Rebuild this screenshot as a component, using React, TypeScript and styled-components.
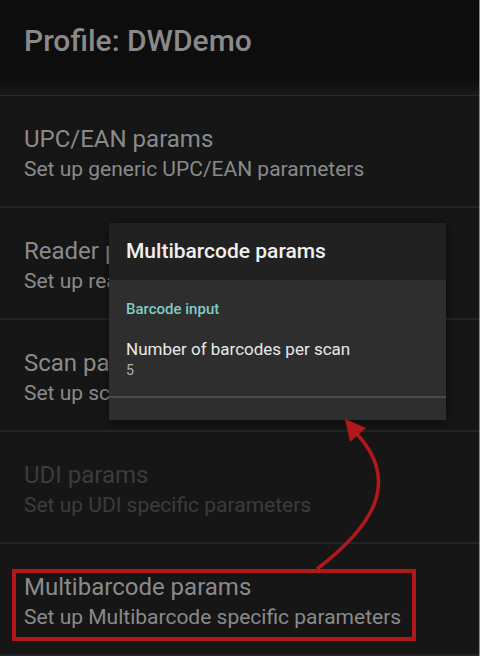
import React from "react"
import styled, { createGlobalStyle } from "styled-components"

const GlobalStyle = createGlobalStyle`
  html, body {
    margin: 0;
    padding: 0;
    background: #161616;
  }
  * { box-sizing: border-box; }
`

const Screen = styled.div`
  position: relative;
  width: 480px;
  height: 656px;
  overflow: hidden;
  background: #161616;
  border-right: 1px solid #8a8a8a;
  font-family: Roboto, "Liberation Sans", sans-serif;
`

const Header = styled.div`
  height: 96px;
  padding: 24px 24px 0;
  background: linear-gradient(#0d0d0d 0, #0d0d0d 80px, #1a1a1a 95px);
  border-bottom: 1px solid #2a2a2a;
`

const HeaderTitle = styled.h1`
  margin: 0;
  font-size: 30px;
  font-weight: 500;
  color: #8a8a8a;
  line-height: 34px;
`

const List = styled.div`
  display: flex;
  flex-direction: column;
`

const Item = styled.div<{ $disabled?: boolean }>`
  height: 112px;
  padding: 28px 24px 0;
  border-bottom: 2px solid #242424;
  color: ${p => (p.$disabled ? "#3c3c3c" : "#8a8a8a")};
`

const ItemTitle = styled.div`
  font-size: 24px;
  line-height: 30px;
  white-space: nowrap;
`

const ItemSummary = styled.div`
  font-size: 21px;
  line-height: 30px;
  white-space: nowrap;
`

const Dialog = styled.div`
  position: absolute;
  left: 109px;
  top: 223px;
  width: 337px;
  height: 197px;
  background: #2e2e2e;
  box-shadow: 0 2px 10px rgba(0, 0, 0, 0.5);
`

const DialogHeader = styled.div`
  height: 57px;
  padding: 16px 17px 0;
  background: #212121;
  color: #f0f0f0;
  font-size: 21px;
  font-weight: 500;
`

const Category = styled.div`
  padding: 20px 17px 0;
  color: #80cbc4;
  font-size: 15px;
  line-height: 18px;
  font-weight: 500;
`

const Pref = styled.div`
  padding: 20px 17px 0;
  height: 80px;
  border-bottom: 2px solid #4a4a4a;
`

const PrefTitle = styled.div`
  color: #e8e8e8;
  font-size: 17px;
  line-height: 22px;
`

const PrefValue = styled.div`
  color: #b0b0b0;
  font-size: 14px;
  line-height: 20px;
`

const Highlight = styled.div`
  position: absolute;
  left: 12px;
  top: 569px;
  width: 404px;
  height: 72px;
  border: 4px solid #b2181a;
`

const Annotation = styled.svg`
  position: absolute;
  left: 0;
  top: 0;
  pointer-events: none;
`

const items = [
  { title: "UPC/EAN params", summary: "Set up generic UPC/EAN parameters" },
  { title: "Reader params", summary: "Set up reader parameters" },
  { title: "Scan params", summary: "Set up scanning parameters" },
  { title: "UDI params", summary: "Set up UDI specific parameters", disabled: true },
  { title: "Multibarcode params", summary: "Set up Multibarcode specific parameters" },
]

export default function App() {
  return (
    <>
      <GlobalStyle />
      <Screen>
        <Header>
          <HeaderTitle>Profile: DWDemo</HeaderTitle>
        </Header>
        <List>
          {items.map(it => (
            <Item key={it.title} $disabled={it.disabled}>
              <ItemTitle>{it.title}</ItemTitle>
              <ItemSummary>{it.summary}</ItemSummary>
            </Item>
          ))}
        </List>

        <Dialog>
          <DialogHeader>Multibarcode params</DialogHeader>
          <Category>Barcode input</Category>
          <Pref>
            <PrefTitle>Number of barcodes per scan</PrefTitle>
            <PrefValue>5</PrefValue>
          </Pref>
        </Dialog>

        <Highlight />
        <Annotation width="480" height="656" viewBox="0 0 480 656">
          <path d="M317 569 C 372 527, 402 482, 356 433" fill="none" stroke="#b2181a" strokeWidth="3.5" />
          <polygon points="345,419 350,442 366,428" fill="#b2181a" />
        </Annotation>
      </Screen>
    </>
  )
}
